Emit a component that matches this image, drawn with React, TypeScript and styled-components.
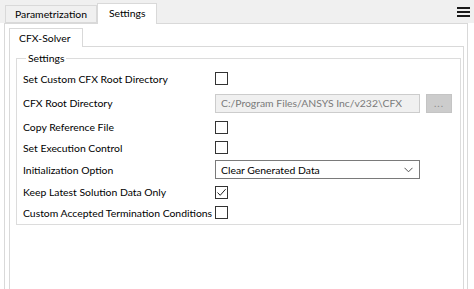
import React from 'react';
import styled, { createGlobalStyle } from 'styled-components';

const GlobalStyle = createGlobalStyle`
  html, body {
    margin: 0;
    padding: 0;
    background: #ffffff;
  }
  body {
    font-family: Lato, 'Noto Sans', sans-serif;
    font-size: 10.4px;
    color: #000;
  }
`;

const Window = styled.div`
  width: 474px;
  height: 289px;
  display: flex;
  flex-direction: column;
  overflow: hidden;
  background: #ffffff;
`;

const TabBar = styled.div`
  height: 23px;
  flex: none;
  display: flex;
  align-items: flex-end;
  padding-left: 5px;
  background: #f0f0f0;
  position: relative;
`;

const Tab = styled.div<{ $active?: boolean; $width: number; $pad: number }>`
  box-sizing: border-box;
  height: ${(p) => (p.$active ? '21px' : '18px')};
  width: ${(p) => p.$width}px;
  display: flex;
  align-items: center;
  padding-left: ${(p) => p.$pad}px;
  padding-bottom: ${(p) => (p.$active ? '2px' : '0')};
  background: ${(p) => (p.$active ? '#ffffff' : '#f0f0f0')};
  border: 1px solid #d9d9d9;
  border-bottom: ${(p) => (p.$active ? 'none' : '1px solid #d9d9d9')};
  margin-bottom: ${(p) => (p.$active ? '-1px' : '0')};
  position: relative;
  z-index: ${(p) => (p.$active ? 1 : 0)};
  white-space: nowrap;
`;

const MenuButton = styled.div`
  position: absolute;
  right: 4px;
  top: 7px;
  width: 13px;
  display: flex;
  flex-direction: column;
  gap: 2px;
`;

const MenuBar = styled.span`
  display: block;
  height: 2px;
  background: #1a1a1a;
`;

const OuterPanel = styled.div`
  flex: 1;
  margin-left: 4px;
  width: 464px;
  box-sizing: border-box;
  border: 1px solid #d9d9d9;
  border-bottom: none;
  padding: 4px 3px 0 4px;
  display: flex;
  flex-direction: column;
`;

const InnerTabBar = styled.div`
  height: 18px;
  flex: none;
  display: flex;
  align-items: flex-end;
`;

const InnerTab = styled.div`
  box-sizing: border-box;
  height: 19px;
  width: 74px;
  padding-left: 9px;
  display: flex;
  align-items: center;
  border: 1px solid #d9d9d9;
  border-bottom: none;
  background: #ffffff;
  margin-bottom: -1px;
  position: relative;
  z-index: 1;
`;

const InnerPanel = styled.div`
  flex: 1;
  box-sizing: border-box;
  border: 1px solid #d9d9d9;
  border-bottom: none;
  padding: 5px 2px 0 6px;
`;

const GroupBox = styled.fieldset`
  margin: 0;
  padding: 4px 6px 2px 6px;
  border: 1px solid #dcdcdc;
  min-width: 0;
`;

const GroupTitle = styled.legend`
  padding: 0 2px;
  margin-left: 3px;
  line-height: 12px;
`;

const FormGrid = styled.div`
  display: grid;
  grid-template-columns: 192px 1fr;
  grid-template-rows: 21px 28px 20px 21px 23px 22px 19px;
  align-items: center;
`;

const Label = styled.div`
  white-space: nowrap;
`;

const Control = styled.div`
  display: flex;
  align-items: center;
  gap: 6px;
`;

const Box = styled.span`
  box-sizing: border-box;
  width: 13px;
  height: 13px;
  border: 1px solid #333333;
  background: #ffffff;
  display: flex;
  align-items: center;
  justify-content: center;
`;

const PathField = styled.div`
  box-sizing: border-box;
  width: 205px;
  height: 19px;
  background: #f0f0f0;
  border: 1px solid #cccccc;
  color: #7a7a7a;
  padding-left: 5px;
  display: flex;
  align-items: center;
  white-space: nowrap;
  overflow: hidden;
`;

const BrowseButton = styled.div`
  box-sizing: border-box;
  width: 26px;
  height: 19px;
  background: #cccccc;
  border: 1px solid #c4c4c4;
  color: #8a8a8a;
  font-size: 10px;
  display: flex;
  align-items: center;
  justify-content: center;
  letter-spacing: 1px;
`;

const Select = styled.div`
  box-sizing: border-box;
  width: 205px;
  height: 19px;
  border: 1px solid #7a7a7a;
  background: #ffffff;
  padding: 0 6px 0 5px;
  display: flex;
  align-items: center;
  justify-content: space-between;
  white-space: nowrap;
`;

const CheckBox = ({ checked }: { checked?: boolean }) => (
  <Box>
    {checked && (
      <svg width="11" height="11" viewBox="0 0 11 11">
        <path d="M1.5 5.5 L4.2 8.3 L9.6 2.2" fill="none" stroke="#222" strokeWidth="1" />
      </svg>
    )}
  </Box>
);

const Chevron = () => (
  <svg width="9" height="6" viewBox="0 0 9 6">
    <path d="M0.5 0.8 L4.5 4.8 L8.5 0.8" fill="none" stroke="#555" strokeWidth="1" />
  </svg>
);

export default function App() {
  return (
    <>
      <GlobalStyle />
      <Window>
        <TabBar>
          <Tab $width={92} $pad={9}>Parametrization</Tab>
          <Tab $active $width={60} $pad={11}>Settings</Tab>
          <MenuButton>
            <MenuBar />
            <MenuBar />
            <MenuBar />
          </MenuButton>
        </TabBar>
        <OuterPanel>
          <InnerTabBar>
            <InnerTab>CFX-Solver</InnerTab>
          </InnerTabBar>
          <InnerPanel>
            <GroupBox>
              <GroupTitle>Settings</GroupTitle>
              <FormGrid>
                <Label>Set Custom CFX Root Directory</Label>
                <Control>
                  <CheckBox />
                </Control>
                <Label>CFX Root Directory</Label>
                <Control>
                  <PathField>C:/Program Files/ANSYS Inc/v232\CFX</PathField>
                  <BrowseButton>...</BrowseButton>
                </Control>
                <Label>Copy Reference File</Label>
                <Control>
                  <CheckBox />
                </Control>
                <Label>Set Execution Control</Label>
                <Control>
                  <CheckBox />
                </Control>
                <Label>Initialization Option</Label>
                <Control>
                  <Select>
                    <span>Clear Generated Data</span>
                    <Chevron />
                  </Select>
                </Control>
                <Label>Keep Latest Solution Data Only</Label>
                <Control>
                  <CheckBox checked />
                </Control>
                <Label>Custom Accepted Termination Conditions</Label>
                <Control>
                  <CheckBox />
                </Control>
              </FormGrid>
            </GroupBox>
          </InnerPanel>
        </OuterPanel>
      </Window>
    </>
  );
}
